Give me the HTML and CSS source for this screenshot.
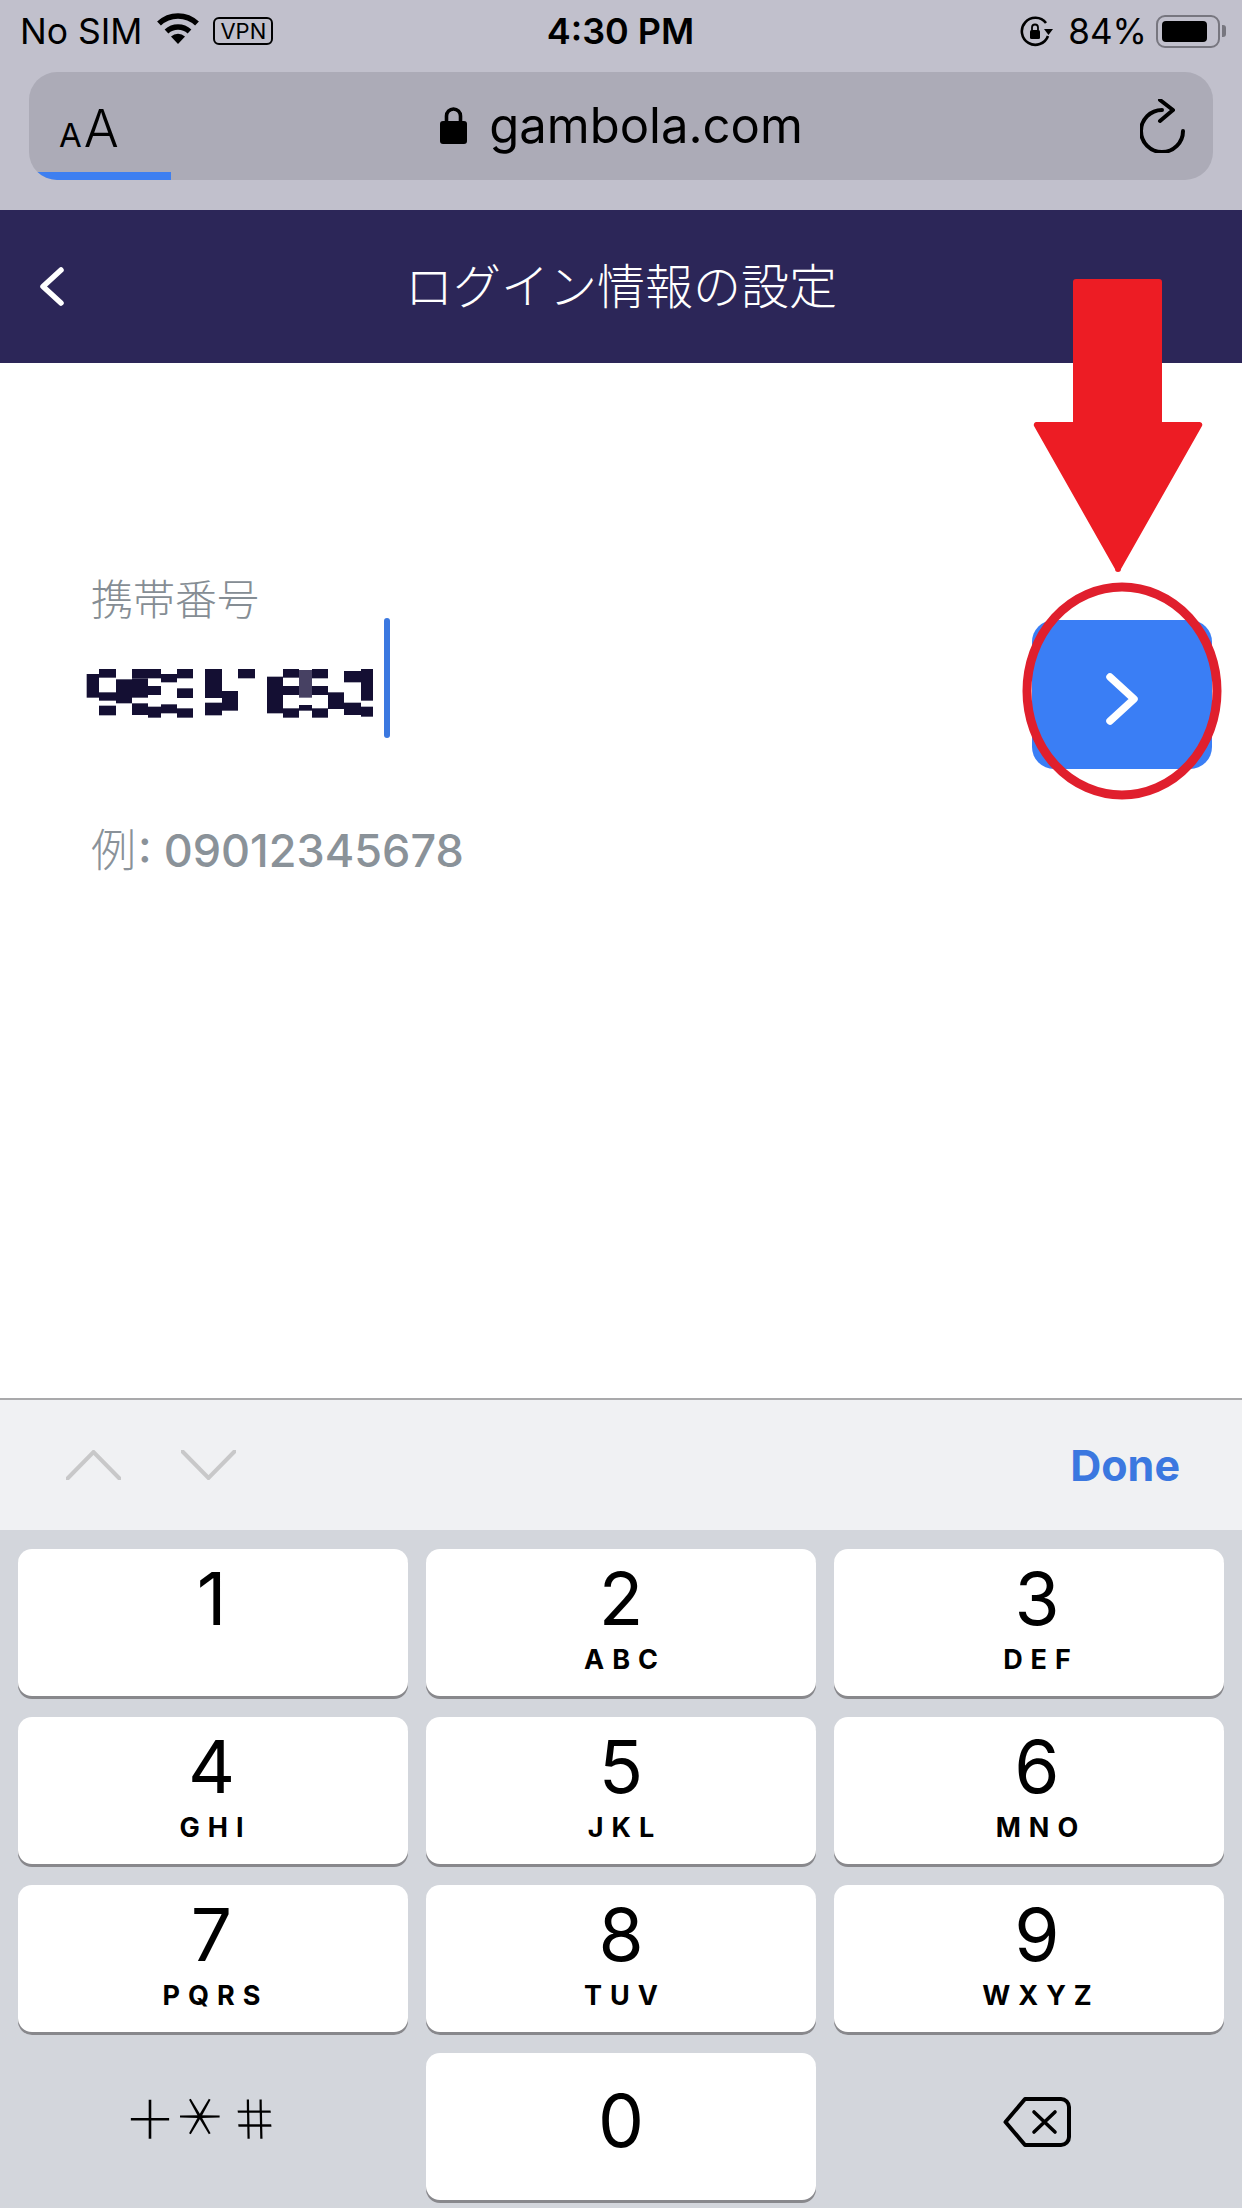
FILE: index.html
```html
<!DOCTYPE html>
<html lang="ja">

<head>
    <title>ログイン情報の設定</title>
    <link rel="stylesheet" href="styles.css">
</head>

<body>
    <div class="screen">
        <div class="browserChrome">
            <div class="statusBar">
                <div class="statusLeft">
                    <span>No SIM</span>
                    <svg class="wifiIcon" viewBox="0 0 44 32" width="44" height="32">
                        <path d="M22 32 L15 24.5 A10.5 10.5 0 0 1 29 24.5 Z" fill="#000" />
                        <path d="M10.5 19.5 A17 17 0 0 1 33.5 19.5" fill="none" stroke="#000" stroke-width="5.5" />
                        <path d="M3 11.5 A27.5 27.5 0 0 1 41 11.5" fill="none" stroke="#000" stroke-width="5.5" />
                    </svg>
                    <span class="vpnBadge">VPN</span>
                </div>
                <div class="statusTime">4:30 PM</div>
                <div class="statusRight">
                    <svg class="rotationIcon" viewBox="0 0 34 32" width="34" height="32">
                        <path d="M27 8 A13.5 13.5 0 1 0 29 21" fill="none" stroke="#000" stroke-width="2.6" />
                        <path d="M25 14 L34 14 L29.5 20 Z" fill="#000" />
                        <rect x="11" y="15" width="10" height="9" rx="1.5" fill="#000" />
                        <path d="M13 15 V12.5 A3 3 0 0 1 19 12.5 V15" fill="none" stroke="#000" stroke-width="1.8" />
                    </svg>
                    <span class="batteryPct">84%</span>
                    <div class="battery">
                        <div class="batteryBody">
                            <div class="batteryFill"></div>
                        </div>
                        <div class="batteryNub"></div>
                    </div>
                </div>
            </div>
            <div class="urlBar">
                <div class="textSize"><span class="smallA">A</span><span class="bigA">A</span></div>
                <div class="urlCenter">
                    <svg class="lockIcon" viewBox="0 0 27 38" width="27" height="38">
                        <path d="M6.5 17 V10 A7 7 0 0 1 20.5 10 V17" fill="none" stroke="#000" stroke-width="3.6" />
                        <rect x="0" y="15" width="27" height="23" rx="3" fill="#000" />
                    </svg>
                    <span class="urlText">gambola.com</span>
                </div>
                <svg class="reloadIcon" viewBox="0 0 45 54" width="45" height="54">
                    <path d="M22 11 A21 21 0 1 0 43 32" fill="none" stroke="#000" stroke-width="4" stroke-linecap="round" />
                    <path d="M20 1 L33 11 L20 22" fill="none" stroke="#000" stroke-width="4" stroke-linecap="round" stroke-linejoin="round" />
                </svg>
                <div class="loadProgress"></div>
            </div>
        </div>

        <div class="navBar">
            <svg class="backIcon" viewBox="0 0 27 41" width="27" height="41">
                <path d="M23 4 L5 20.5 L23 37" fill="none" stroke="#fff" stroke-width="5.5" stroke-linecap="round" stroke-linejoin="round" />
            </svg>
            <div class="navTitle">ログイン情報の設定</div>
        </div>

        <div class="content">
            <div class="phoneRow">
                <div class="phoneField">
                    <label class="fieldLabel">携帯番号</label>
                    <div class="fieldValue">
                        <svg class="maskedNumber" viewBox="0 0 900 195" width="300" height="65" fill="#140f33">
                            <rect x="57" y="27" width="51" height="26" />
                            <rect x="20" y="42" width="37" height="71" />
                            <rect x="57" y="97" width="51" height="25" />
                            <rect x="108" y="58" width="48" height="72" />
                            <rect x="57" y="137" width="51" height="29" />
                            <rect x="156" y="27" width="87" height="28" />
                            <rect x="156" y="55" width="48" height="58" />
                            <rect x="204" y="78" width="39" height="27" />
                            <rect x="243" y="42" width="48" height="25" />
                            <rect x="291" y="27" width="48" height="28" />
                            <rect x="291" y="85" width="48" height="29" />
                            <rect x="156" y="130" width="48" height="35" />
                            <rect x="204" y="140" width="39" height="33" />
                            <rect x="243" y="133" width="48" height="27" />
                            <rect x="291" y="145" width="48" height="28" />
                            <rect x="375" y="27" width="51" height="87" />
                            <rect x="426" y="93" width="48" height="59" />
                            <rect x="375" y="128" width="51" height="38" />
                            <rect x="474" y="27" width="51" height="28" />
                            <rect x="561" y="50" width="48" height="110" />
                            <rect x="609" y="27" width="48" height="26" />
                            <rect x="609" y="78" width="48" height="27" />
                            <rect x="696" y="27" width="48" height="28" />
                            <rect x="696" y="78" width="48" height="27" />
                            <rect x="609" y="145" width="48" height="28" />
                            <rect x="657" y="135" width="39" height="17" />
                            <rect x="696" y="145" width="48" height="28" />
                            <rect x="744" y="97" width="48" height="50" />
                            <rect x="792" y="33" width="51" height="34" />
                            <rect x="843" y="27" width="36" height="95" />
                            <rect x="792" y="128" width="51" height="37" />
                            <rect x="843" y="140" width="36" height="30" />
                            <rect x="657" y="30" width="39" height="83" fill="#474163" />
                        </svg>
                        <div class="caret"></div>
                    </div>
                    <div class="fieldHint"><span class="hintPrefix">例</span>: 09012345678</div>
                </div>
                <button type="button" class="nextBtn">
                    <svg viewBox="0 0 32 52" width="32" height="52">
                        <path d="M4 4 L28 26 L4 48" fill="none" stroke="#fff" stroke-width="7.5" stroke-linecap="round" stroke-linejoin="round" />
                    </svg>
                </button>
            </div>
        </div>

        <div class="accessoryBar">
            <div class="fieldArrows">
                <svg viewBox="0 0 55 30" width="55" height="30">
                    <path d="M1.5 28.5 L27.5 2 L53.5 28.5" fill="none" stroke="#c8c8c9" stroke-width="4" stroke-linecap="round" />
                </svg>
                <svg viewBox="0 0 55 30" width="55" height="30">
                    <path d="M1.5 1.5 L27.5 28 L53.5 1.5" fill="none" stroke="#c8c8c9" stroke-width="4" stroke-linecap="round" />
                </svg>
            </div>
            <div class="doneBtn">Done</div>
        </div>

        <div class="keypad">
            <div class="key"><span class="keyDigit">1</span></div>
            <div class="key"><span class="keyDigit">2</span><span class="keyLetters">ABC</span></div>
            <div class="key"><span class="keyDigit">3</span><span class="keyLetters">DEF</span></div>
            <div class="key"><span class="keyDigit">4</span><span class="keyLetters">GHI</span></div>
            <div class="key"><span class="keyDigit">5</span><span class="keyLetters">JKL</span></div>
            <div class="key"><span class="keyDigit">6</span><span class="keyLetters">MNO</span></div>
            <div class="key"><span class="keyDigit">7</span><span class="keyLetters">PQRS</span></div>
            <div class="key"><span class="keyDigit">8</span><span class="keyLetters">TUV</span></div>
            <div class="key"><span class="keyDigit">9</span><span class="keyLetters">WXYZ</span></div>
            <div class="key keyPlain symbolsKey"><span>＋</span><span class="symbolStar">＊</span><span class="symbolHash">＃</span></div>
            <div class="key zeroKey"><span class="keyDigit">0</span></div>
            <div class="key keyPlain deleteKey">
                <svg viewBox="0 0 68 50" width="68" height="50">
                    <path d="M22 2 H58 A8 8 0 0 1 66 10 V40 A8 8 0 0 1 58 48 H22 L2.5 25 Z" fill="none" stroke="#000" stroke-width="4" stroke-linejoin="round" />
                    <path d="M31 15 L52 35 M52 15 L31 35" fill="none" stroke="#000" stroke-width="3.6" stroke-linecap="round" />
                </svg>
            </div>
        </div>

        <!-- red annotation drawn over the screenshot -->
        <svg class="annotation" viewBox="0 0 1242 2208" width="1242" height="2208">
            <path d="M1076 279 H1159 A3 3 0 0 1 1162 282 V422 H1200 A3 3 0 0 1 1202 426 L1121 569 A3 3 0 0 1 1115 569 L1034 426 A3 3 0 0 1 1036 422 H1073 V282 A3 3 0 0 1 1076 279 Z" fill="#ed1c24" />
            <ellipse cx="1122" cy="691" rx="95" ry="104" fill="none" stroke="#e01f2d" stroke-width="9" />
        </svg>
    </div>
</body>

</html>
```

FILE: styles.css
```css
* {
    padding: 0;
    margin: 0;
    box-sizing: border-box;
}

body {
    font-family: Inter, "Noto Sans CJK JP", sans-serif;
    color: #000;
    background: #fff;
}

.screen {
    position: relative;
    width: 1242px;
    height: 2208px;
    overflow: hidden;
    display: flex;
    flex-direction: column;
}

.browserChrome {
    height: 210px;
    background: #c1c0cc;
}

.statusBar {
    height: 72px;
    padding: 0 16px 10px 20px;
    display: grid;
    grid-template-columns: 1fr auto 1fr;
    align-items: center;
    font-size: 35.5px;
}

.statusLeft {
    display: flex;
    align-items: center;
    gap: 14px;
}

.wifiIcon {
    margin-top: -6px;
}

.vpnBadge {
    font-size: 22px;
    line-height: 24px;
    padding: 0 5px;
    border: 2px solid #000;
    border-radius: 6px;
    margin-left: -1px;
}

.statusTime {
    font-weight: 600;
    font-size: 36px;
    margin-left: -5px;
}

.statusRight {
    display: flex;
    align-items: center;
    justify-content: flex-end;
    gap: 15px;
}

.batteryPct {
    font-size: 35px;
}

.battery {
    display: flex;
    align-items: center;
    gap: 2px;
    margin-left: -6px;
}

.batteryBody {
    width: 64px;
    height: 33px;
    padding: 4px;
    border: 2px solid #77767f;
    border-radius: 9px;
}

.batteryFill {
    width: 45px;
    height: 100%;
    background: #000;
    border-radius: 4px;
}

.batteryNub {
    width: 4px;
    height: 12px;
    background: #77767f;
    border-radius: 0 3px 3px 0;
}

.urlBar {
    position: relative;
    width: 1184px;
    height: 108px;
    margin-left: 29px;
    padding: 0 28px 0 30px;
    display: grid;
    grid-template-columns: 1fr auto 1fr;
    align-items: center;
    background: #acabb7;
    border-radius: 28px;
    overflow: hidden;
}

.textSize {
    display: flex;
    align-items: baseline;
    gap: 2px;
    margin-top: 4px;
}

.smallA {
    font-size: 33px;
}

.bigA {
    font-size: 52px;
    font-weight: 300;
}

.urlCenter {
    display: flex;
    align-items: center;
    gap: 22px;
    margin-left: -1px;
}

.lockIcon {
    margin-top: -2px;
}

.urlText {
    font-size: 49px;
    line-height: 60px;
}

.reloadIcon {
    justify-self: end;
    margin-top: -1px;
}

.loadProgress {
    position: absolute;
    left: 0;
    bottom: 0;
    width: 142px;
    height: 8px;
    background: #3e7ff0;
}

.navBar {
    height: 153px;
    padding-left: 38px;
    display: flex;
    align-items: center;
    position: relative;
    background: #2c2658;
}

.navTitle {
    flex: 1;
    padding: 0 65px 8px 0;
    text-align: center;
    color: #fff;
    font-family: "Noto Sans CJK JP", sans-serif;
    font-size: 48px;
    font-weight: 300;
}

.content {
    flex: 1;
    background: #fff;
}

.phoneRow {
    padding: 212px 30px 0 87px;
    display: flex;
    justify-content: space-between;
    align-items: flex-start;
}

.phoneField {
    display: flex;
    flex-direction: column;
}

.fieldLabel {
    padding-left: 4px;
    font-family: "Noto Sans CJK JP", sans-serif;
    font-size: 42px;
    line-height: 43px;
    font-weight: 300;
    color: #858d94;
}

.fieldValue {
    height: 120px;
    display: flex;
    align-items: center;
    gap: 4px;
}

.maskedNumber {
    margin: 29px 0 0 -7px;
}

.caret {
    width: 6px;
    height: 120px;
    background: #3b78e0;
    border-radius: 3px;
}

.fieldHint {
    margin-top: 82px;
    padding-left: 4px;
    font-size: 45px;
    line-height: 56px;
    font-weight: 500;
    color: #8a9299;
}

.hintPrefix {
    font-family: "Noto Sans CJK JP", sans-serif;
    font-weight: 300;
    margin-right: 2px;
}

.nextBtn {
    width: 180px;
    height: 149px;
    margin-top: 45px;
    padding-top: 8px;
    display: flex;
    align-items: center;
    justify-content: center;
    border: none;
    border-radius: 22px;
    background: #3a7ef5;
}

.accessoryBar {
    height: 132px;
    padding: 0 62px 0 66px;
    display: flex;
    align-items: center;
    justify-content: space-between;
    background: #f0f1f3;
    border-top: 2px solid #a9a9ab;
}

.fieldArrows {
    display: flex;
    gap: 60px;
}

.doneBtn {
    font-size: 43px;
    font-weight: 700;
    color: #3b78e0;
}

.keypad {
    height: 678px;
    padding: 19px 18px 0;
    display: grid;
    grid-template-columns: repeat(3, 390px);
    grid-auto-rows: 147px;
    gap: 21px 18px;
    background: #d3d6dc;
}

.key {
    padding-top: 13px;
    display: flex;
    flex-direction: column;
    align-items: center;
    background: #fff;
    border-radius: 14px;
    box-shadow: 0 3px 0 #88888c;
}

.key:nth-child(3n) {
    padding-left: 16px;
}

.key:nth-child(3n+1) {
    padding-right: 3px;
}

.keyDigit {
    font-size: 73px;
    line-height: 74px;
}

.keyLetters {
    margin-top: 9px;
    padding-left: 8px;
    font-size: 27px;
    line-height: 30px;
    font-weight: 700;
    letter-spacing: 8px;
}

.zeroKey {
    padding-top: 31px;
}

.keyPlain {
    padding-top: 0;
    flex-direction: row;
    justify-content: center;
    background: transparent;
    box-shadow: none;
}

.key.symbolsKey {
    padding: 0 22px 20px 0;
    font-family: "Noto Sans CJK JP", sans-serif;
    font-size: 52px;
    font-weight: 300;
}

.symbolStar {
    transform: rotate(90deg);
}

.symbolHash {
    transform: skewX(8deg);
}

.key.deleteKey {
    padding: 0 0 10px 16px;
}

.annotation {
    position: absolute;
    left: 0;
    top: 0;
    pointer-events: none;
}
```
